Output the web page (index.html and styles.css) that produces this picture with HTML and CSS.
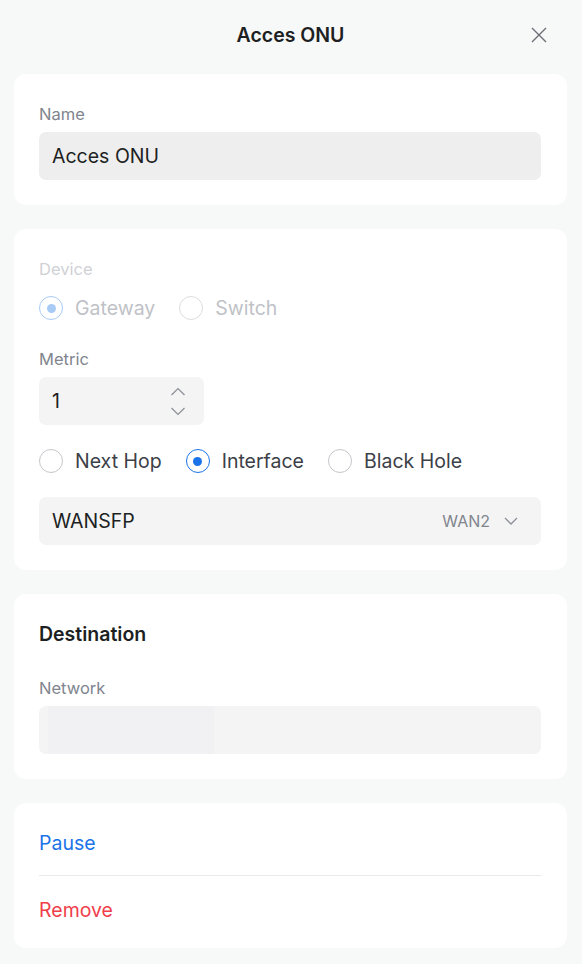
FILE: index.html
```html
<!DOCTYPE html>
<html lang="en">
<head>
  <meta charset="UTF-8">
  <meta name="viewport" content="width=device-width, initial-scale=1.0">
  <title>Acces ONU</title>
  <link rel="stylesheet" href="styles.css">
</head>
<body>
  <header class="top">
    <h1 class="title">Acces ONU</h1>
    <button type="button" class="close" aria-label="Close">
      <svg width="16" height="16" viewBox="0 0 16 16"><path d="M1 1L15 15M15 1L1 15" stroke="#6b6f76" stroke-width="1.4" fill="none"/></svg>
    </button>
  </header>

  <section class="card">
    <div class="label">Name</div>
    <div class="field field-name">Acces ONU</div>
  </section>

  <section class="card">
    <div class="label disabled">Device</div>
    <div class="radios disabled">
      <span class="radio"><span class="dot checked soft"></span>Gateway</span>
      <span class="radio"><span class="dot"></span>Switch</span>
    </div>

    <div class="label metric-label">Metric</div>
    <div class="field field-number">
      <span>1</span>
      <span class="spin">
        <svg width="16" height="9" viewBox="0 0 16 9"><path d="M1.5 8L8 1.5L14.5 8" stroke="#8b8f96" stroke-width="1.2" fill="none"/></svg>
        <svg width="16" height="9" viewBox="0 0 16 9"><path d="M1.5 1L8 7.5L14.5 1" stroke="#8b8f96" stroke-width="1.2" fill="none"/></svg>
      </span>
    </div>

    <div class="radios gateway-type">
      <span class="radio"><span class="dot"></span>Next Hop</span>
      <span class="radio"><span class="dot checked"></span>Interface</span>
      <span class="radio"><span class="dot"></span>Black Hole</span>
    </div>

    <div class="field field-select">
      <span>WANSFP</span>
      <span class="select-right">
        <span class="hint">WAN2</span>
        <svg width="16" height="10" viewBox="0 0 16 10"><path d="M2 2L8 8L14 2" stroke="#8b8f96" stroke-width="1.3" fill="none"/></svg>
      </span>
    </div>
  </section>

  <section class="card">
    <h2 class="section-title">Destination</h2>
    <div class="label">Network</div>
    <div class="field field-empty"><span class="skeleton"></span></div>
  </section>

  <section class="card actions">
    <div class="action pause">Pause</div>
    <div class="action remove">Remove</div>
  </section>
</body>
</html>
```

FILE: styles.css
```css
body {
  margin: 0;
  padding: 0 15px 17px 14px;
  background: #f7f8f8;
  font-family: Inter, "Noto Sans", sans-serif;
  color: #1d1f23;
}

.top {
  height: 74px;
  display: flex;
  align-items: center;
  justify-content: center;
  position: relative;
}

.title {
  margin: 0 0 4px;
  font-size: 19.5px;
  font-weight: 600;
}

.close {
  position: absolute;
  right: 20px;
  top: 27px;
  border: 0;
  background: none;
  padding: 0;
  width: 16px;
  height: 16px;
}

.close svg {
  display: block;
}

.card {
  background: #ffffff;
  border-radius: 12px;
  padding: 30px 26px 25px 25px;
  margin-bottom: 24px;
}

.label {
  font-size: 16.5px;
  color: #80858e;
  line-height: 20px;
  margin-bottom: 8px;
}

.label.disabled {
  color: #cfd1d5;
}

.field {
  height: 48px;
  border-radius: 7px;
  background: #f4f4f4;
  display: flex;
  align-items: center;
  padding: 0 13px;
  font-size: 19.5px;
  color: #1d1f23;
}

.field-name {
  background: #eeeeee;
}

.radios {
  display: flex;
  gap: 24px;
  font-size: 19.5px;
  color: #3c4047;
  height: 26px;
  align-items: center;
}

.radios.disabled {
  color: #bfc2c7;
  margin-top: 16px;
}

.radio {
  display: flex;
  align-items: center;
  gap: 12px;
}

.dot {
  width: 22px;
  height: 22px;
  border: 1.3px solid #c4c6ca;
  border-radius: 50%;
  display: flex;
  align-items: center;
  justify-content: center;
}

.disabled .dot {
  border-color: #dcdde0;
}

.dot.checked {
  border-color: #1a73e8;
}

.dot.checked::after {
  content: "";
  width: 9px;
  height: 9px;
  border-radius: 50%;
  background: #1a73e8;
}

.dot.soft,
.disabled .dot.soft {
  border-color: #a8cbf6;
}

.dot.soft::after {
  background: #a8cbf6;
}

.metric-label {
  margin-top: 28px;
}

.field-number {
  width: 139px;
  justify-content: space-between;
}

.spin {
  display: flex;
  flex-direction: column;
  gap: 11px;
  margin-right: 5px;
}

.spin svg {
  display: block;
}

.gateway-type {
  margin-top: 23px;
}

.field-select {
  margin-top: 23px;
  justify-content: space-between;
}

.select-right {
  display: flex;
  align-items: center;
  gap: 13px;
  margin-right: 9px;
}

.hint {
  font-size: 16px;
  color: #80858e;
}

.section-title {
  margin: 0 0 29px;
  font-size: 19.5px;
  font-weight: 600;
  line-height: 30px;
  margin-top: -5px;
}

.field-empty {
  padding: 0 0 0 9px;
  align-items: stretch;
}

.skeleton {
  width: 166px;
  background: #f1f1f3;
}

.actions {
  padding-top: 0;
  padding-bottom: 0;
}

.action {
  font-size: 19.5px;
  display: flex;
  align-items: center;
}

.pause {
  color: #1a73e8;
  border-bottom: 1px solid #e8e9eb;
  height: 64px;
  padding-top: 8px;
}

.remove {
  color: #ef3e4a;
  height: 68px;
  padding-bottom: 4px;
}
```
